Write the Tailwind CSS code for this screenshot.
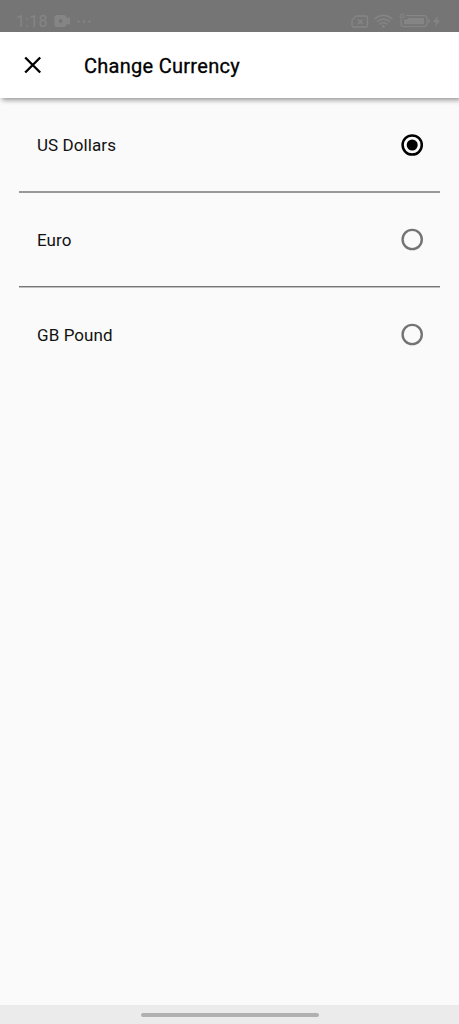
<!DOCTYPE html>
<html lang="en">
<head>
<meta charset="utf-8">
<title>Change Currency</title>
<script src="https://cdn.jsdelivr.net/npm/@tailwindcss/browser@4"></script>
</head>
<body class="flex h-[1024px] w-[459px] flex-col overflow-hidden bg-[#fafafa] font-['Roboto',sans-serif] text-[#111]">
  <div class="relative z-10 flex h-8 shrink-0 items-end bg-[#757575] pl-4 pr-[17px] text-[#858585]">
    <span class="w-[38px] whitespace-nowrap text-[16px] leading-[21px] tracking-[0.200px]">1:18</span>
    <svg class="mb-1 h-[14px] w-[17px]" viewBox="0 0 17 14" fill="currentColor"><path fill-rule="evenodd" d="M3 1h7a2.500 2.500 0 0 1 2.500 2.500v1L16 3v8l-3.500-1.500v1A2.500 2.500 0 0 1 10 13H3a2.500 2.500 0 0 1-2.500-2.500v-7A2.500 2.500 0 0 1 3 1Zm3.500 4a2 2 0 1 0 0 4 2 2 0 0 0 0-4Z"/></svg>
    <svg class="mb-[9px] ml-[6px] h-[3px] w-[15px]" viewBox="0 0 15 3" fill="currentColor"><path d="M.5.5h2v2h-2zM6 .5h2v2H6zM11.500.5h2v2h-2z"/></svg>
    <svg class="mb-[3px] ml-auto h-4 w-[92px]" viewBox="0 0 92 16" fill="none" stroke="currentColor">
      <path d="M6 3h10a1.500 1.500 0 0 1 1.500 1.500v8A1.500 1.500 0 0 1 16 14H3.500A1.500 1.500 0 0 1 2 12.500V7Z" stroke-width="1.300"/>
      <path d="m8 6.500 4.500 4.500m0-4.500L8 11" stroke-width="1.700"/>
      <path d="M24.500 6q9-7.500 18 0M27 8.700q6.500-5.200 13 0M29.500 11.300q4-3 8 0" stroke-width="1.600"/>
      <path d="m31.500 13.200 2-1.200 2 1.200-2 2Z" fill="currentColor" stroke="none"/>
      <path d="M56 2.600h18a3 3 0 0 1 3 3v5a3 3 0 0 1-3 3H54a3 3 0 0 1-3-3V6" stroke-width="1.200"/>
      <circle cx="52" cy="3" r="1.800" stroke-width="1.200"/>
      <path d="M54 6.500h3L58.500 5H74v6.300H54Z" fill="currentColor" stroke="none"/>
      <path d="M79 6.500v3.500" stroke-width="1.500"/>
      <path d="m88 3-5 6h3l-1 5 5-6.500h-3Z" fill="currentColor" stroke="none"/>
    </svg>
  </div>
  <header class="relative flex h-[66px] shrink-0 items-center bg-white pl-6 shadow-[2px_2px_5px_rgba(0,0,0,0.42)]">
    <svg class="h-[18px] w-[18px]" viewBox="0 0 18 18" fill="none" stroke="#000" stroke-width="2.400"><path d="m1.200 1.500 15 15m0-15-15 15"/></svg>
    <h1 class="ml-[42px] mt-[2px] whitespace-nowrap text-[20px] font-normal leading-7 tracking-[0.280px] text-black [-webkit-text-stroke:0.300px_#000]">Change Currency</h1>
  </header>
  <main class="flex flex-1 flex-col px-[19px]">
    <div class="flex h-[93px] items-center justify-between pl-[18px] pr-4">
      <span class="mt-px text-[17px] leading-6 tracking-[0.080px]">US Dollars</span>
      <svg class="h-6 w-6" viewBox="0 0 24 24"><circle cx="12.200" cy="12" r="9.600" fill="none" stroke="#000" stroke-width="2.500"/><circle cx="12.200" cy="12" r="5.500" fill="#000"/></svg>
    </div>
    <div class="h-[2px] bg-[#999]"></div>
    <div class="flex h-[93px] items-center justify-between pl-[18px] pr-4">
      <span class="mt-px text-[17px] leading-6 tracking-[0.080px]">Euro</span>
      <svg class="h-6 w-6" viewBox="0 0 24 24"><circle cx="12.200" cy="11.500" r="9.600" fill="none" stroke="#747474" stroke-width="2.400"/></svg>
    </div>
    <div class="h-[2px] bg-linear-to-b from-[#777] from-50% to-[#c0c0c0] to-50%"></div>
    <div class="flex h-[93px] items-center justify-between pl-[18px] pr-4">
      <span class="mt-px text-[17px] leading-6 tracking-[0.080px]">GB Pound</span>
      <svg class="h-6 w-6" viewBox="0 0 24 24"><circle cx="12.200" cy="11.500" r="9.600" fill="none" stroke="#747474" stroke-width="2.400"/></svg>
    </div>
  </main>
  <footer class="flex h-[19px] shrink-0 justify-center bg-[#ebebeb] pt-[8px]">
    <div class="h-1 w-[178px] rounded-full bg-[#b1b1b1]"></div>
  </footer>
</body>
</html>
